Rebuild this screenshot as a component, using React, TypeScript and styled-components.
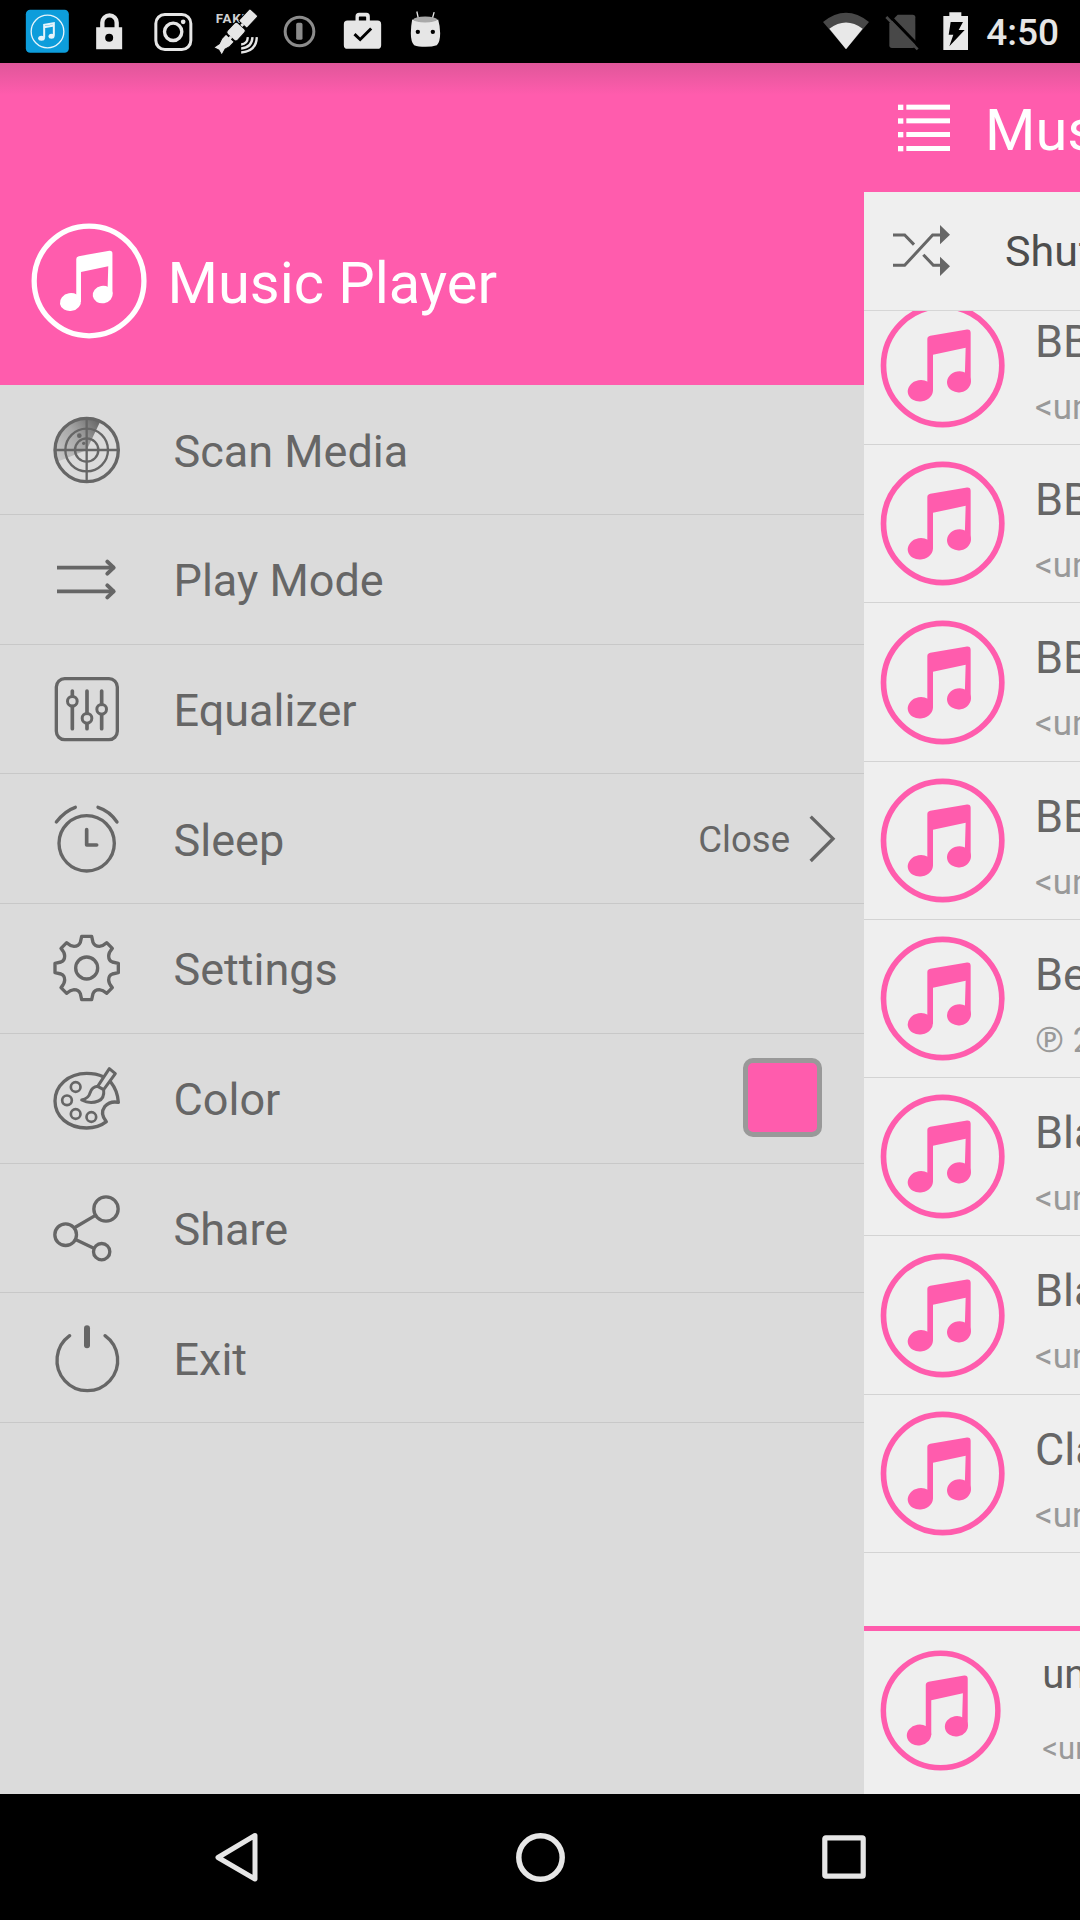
import React from "react";
import styled, { createGlobalStyle } from "styled-components";

const PINK = "#ff5cad";
const INK = "#666666";

const GlobalStyle = createGlobalStyle`
  * { box-sizing: border-box; }
  body { margin: 0; background: #000; font-family: Roboto, "Noto Sans", sans-serif; }
  svg { display: block; flex: none; }
`;

const Screen = styled.div`
  width: 1080px;
  height: 1920px;
  display: flex;
  flex-direction: column;
  overflow: hidden;
  background: #000;
`;

const StatusBar = styled.header`
  height: 63px;
  flex: none;
  display: flex;
  align-items: center;
  padding: 0 21px 0 16px;
  color: #e6e6e6;
`;

const Spacer = styled.div`
  flex: 1;
`;

const SystemIcons = styled.div`
  display: flex;
  align-items: center;
`;

const WifiSlot = styled.span`
  margin-right: 7px;
`;

const Clock = styled.span`
  margin-left: 10.5px;
  padding-top: 3px;
  font-size: 37px;
  font-weight: 500;
  line-height: 44px;
  white-space: nowrap;
`;

const Body = styled.main`
  position: relative;
  flex: 1;
  min-height: 0;
  display: flex;
`;

const TopShade = styled.div`
  position: absolute;
  inset: 0 0 auto 0;
  height: 32px;
  background: linear-gradient(rgba(70, 60, 60, 0.17), rgba(70, 60, 60, 0));
`;

const Drawer = styled.aside`
  width: 864px;
  flex: none;
  background: #dbdbdb;
`;

const DrawerHeader = styled.div`
  height: 322.4px;
  display: flex;
  align-items: center;
  gap: 20px;
  padding: 113px 0 0 30px;
  background: ${PINK};
  color: #fff;
`;

const AppName = styled.h1`
  margin: 0;
  padding-top: 5px;
  font-size: 57.8px;
  font-weight: 400;
  line-height: 68px;
`;

const MenuRow = styled.div`
  height: 129.7px;
  display: flex;
  align-items: center;
  padding-left: 51px;
  border-bottom: 1px solid #c8c8c8;
  color: ${INK};
`;

const MenuLabel = styled.span`
  flex: 1;
  margin-left: 52.5px;
  padding-top: 4px;
  font-size: 45px;
  line-height: 54px;
`;

const MenuValue = styled.span`
  margin-right: 18px;
  padding-top: 3px;
  font-size: 36.5px;
  line-height: 44px;
`;

const ChevronSlot = styled.span`
  margin-right: 28px;
`;

const Swatch = styled.span`
  width: 79px;
  height: 79px;
  margin: 0 42px 1px 0;
  border: 5px solid #999;
  border-radius: 10px;
  background: ${PINK};
`;

const Content = styled.section`
  width: 216px;
  flex: none;
  display: flex;
  flex-direction: column;
  overflow: hidden;
  background: #efefef;
  white-space: nowrap;
`;

const Toolbar = styled.div`
  height: 129px;
  flex: none;
  display: flex;
  align-items: center;
  gap: 35px;
  padding-left: 34px;
  background: ${PINK};
  color: #fff;
`;

const ToolbarTitle = styled.span`
  padding-top: 5px;
  font-size: 57.8px;
  line-height: 68px;
`;

const ShuffleRow = styled.div`
  height: 119px;
  flex: none;
  display: flex;
  align-items: center;
  gap: 55px;
  padding-left: 29px;
  border-bottom: 1px solid #d6d6d6;
  color: #4d4d4d;
`;

const ShuffleLabel = styled.span`
  font-size: 43px;
  line-height: 52px;
`;

const TrackList = styled.div`
  flex: 1;
  min-height: 0;
  display: flex;
  flex-direction: column;
  justify-content: flex-end;
  overflow: hidden;
  padding-bottom: 73px;
`;

const Track = styled.div`
  height: 158.3px;
  flex: none;
  display: flex;
  align-items: center;
  gap: 29px;
  padding-left: 15.3px;
  border-bottom: 1px solid #d3d3d3;
`;

const TrackText = styled.div`
  display: flex;
  flex-direction: column;
  align-self: flex-start;
  padding-top: 28px;
`;

const TrackTitle = styled.span`
  color: ${INK};
  font-size: 45px;
  line-height: 54px;
`;

const TrackArtist = styled.span`
  margin-top: 18px;
  color: #999;
  font-size: 35px;
  line-height: 42px;
`;

const Player = styled.div`
  height: 168px;
  flex: none;
  display: flex;
  gap: 41px;
  padding-left: 14.7px;
  border-top: 5px solid ${PINK};
`;

const PlayerArt = styled.div`
  padding-top: 17.5px;
`;

const PlayerText = styled.div`
  display: flex;
  flex-direction: column;
  padding-top: 20px;
`;

const PlayerTitle = styled.span`
  color: #5c5c5c;
  font-size: 40px;
  line-height: 48px;
`;

const PlayerArtist = styled.span`
  margin-top: 31px;
  color: #999;
  font-size: 31px;
  line-height: 38px;
`;

const NavBar = styled.nav`
  height: 126px;
  flex: none;
  display: flex;
  justify-content: center;
`;

const NavButton = styled.div`
  width: 303.7px;
  display: flex;
  align-items: center;
  justify-content: center;
`;

/* ---------- drawings ---------- */

const Notes = () => (
  <g>
    <path d="M-46 62V-79Q-46 -87 -37 -89L73 -108Q84 -109 84 -98V49H66L69 -53L-29 -32V76H-46Z" />
    <ellipse cx="-67" cy="76" rx="38" ry="32" transform="rotate(-10 -67 76)" />
    <ellipse cx="49" cy="49" rx="36" ry="31.5" transform="rotate(-10 49 49)" />
  </g>
);

const Disc = ({ size, color, noteScale = 1 }: { size: number; color: string; noteScale?: number }) => (
  <svg width={size} height={size} viewBox="-191 -190.5 380 380" fill={color}>
    <circle r="177.5" fill="none" stroke={color} strokeWidth="17" />
    <g transform={`scale(${noteScale})`}>
      <Notes />
    </g>
  </svg>
);

const StatusIcon = ({ children }: { children: React.ReactNode }) => (
  <svg width="63" height="63" viewBox="-94.5 -94.5 189 189" fill="#e6e6e6">
    {children}
  </svg>
);

const StatusIcons = () => (
  <>
    <StatusIcon>
      <rect x="-65" y="-65" width="129" height="129" rx="13" fill="#0d9ddb" />
      <circle r="49" fill="none" strokeWidth="4" stroke="#e6f4fb" />
      <path
        d="M-10 19V-20L19 -25V13M-10 -13L19 -18"
        fill="none"
        stroke="#e6f4fb"
        strokeWidth="6"
      />
      <ellipse cx="-18" cy="20" rx="10" ry="7.5" fill="#e6f4fb" />
      <ellipse cx="12" cy="14" rx="9" ry="7.5" fill="#e6f4fb" />
    </StatusIcon>
    <StatusIcon>
      <path
        fillRule="evenodd"
        d="M-43 -13H-31V-27A28 28 0 0 1 25 -27V-13H35V53H-43ZM-18 -13H12V-27A15 15 0 0 0 -18 -27ZM-16 19A12 12 0 1 0 8 19A12 12 0 1 0 -16 19Z"
      />
    </StatusIcon>
    <StatusIcon>
      <g fill="none" stroke="#e6e6e6">
        <rect x="-53" y="-51" width="105" height="105" rx="27" strokeWidth="9" />
        <circle cx="-1" cy="1" r="26" strokeWidth="10" />
      </g>
      <circle cx="29" cy="-29" r="7" />
    </StatusIcon>
    <StatusIcon>
      <text x="-62" y="-26" fontSize="40" fontWeight="700" letterSpacing="2" fill="#d2d2d2">
        FAKE
      </text>
      <g transform="translate(-2 1) rotate(-47)" stroke="#000" strokeWidth="3">
        <path d="M-80 -17L-75 0L-80 17L-60 12L-44 17L-25 17V-17H-44L-60 -12Z" />
        <rect x="30" y="-17" width="50" height="34" rx="4" />
        <rect x="-22" y="-21" width="46" height="42" rx="8" />
        <path d="M24 0H32M-30 0H-20" stroke="#e6e6e6" strokeWidth="9" />
      </g>
      <g fill="none" stroke="#e6e6e6" strokeWidth="7">
        <path d="M14 39Q33 37 34 17" />
        <path d="M14 51Q46 49 48 17" />
        <path d="M14 63Q59 60 61 17" />
      </g>
    </StatusIcon>
    <StatusIcon>
      <circle r="43" fill="none" stroke="#8c8c8c" strokeWidth="9" />
      <rect x="-10" y="-26" width="19" height="51" rx="5" fill="#8c8c8c" />
    </StatusIcon>
    <StatusIcon>
      <path
        fillRule="evenodd"
        d="M-45 -33H-21V-45Q-21 -56 -10 -56H12Q22 -56 22 -45V-33H45Q56 -33 56 -22V41Q56 52 45 52H-45Q-56 52 -56 41V-22Q-56 -33 -45 -33ZM-11 -33H11V-43Q11 -45 9 -45H-9Q-11 -45 -11 -43Z"
      />
      <path d="M-24 8L-7 24L26 -9" fill="none" stroke="#000" strokeWidth="9" />
    </StatusIcon>
    <StatusIcon>
      <path d="M-26 -60L-21 -37M26 -58L20 -37" stroke="#e6e6e6" strokeWidth="4" />
      <path d="M-40 -36Q0 -22 38 -36Q44 -15 44 5Q44 31 34 41Q20 46 0 46Q-22 46 -34 41Q-44 31 -44 5Q-44 -15 -40 -36Z" />
      <ellipse cx="-1" cy="-36" rx="36" ry="9" fill="#a9a9a9" />
      <circle cx="-23" cy="1" r="6.5" fill="#000" />
      <circle cx="22" cy="1" r="6.5" fill="#000" />
    </StatusIcon>
  </>
);

const WifiIcon = () => (
  <svg width="46" height="63" viewBox="127 0 138 189">
    <path d="M127 66Q196 11 265 66L196 148Z" fill="#484848" />
    <path d="M146 86Q196 49 246 86L196 148Z" fill="#e8e8e8" />
  </svg>
);

const NoSimIcon = () => (
  <svg width="51" height="63" viewBox="287 0 153 189">
    <path d="M352 44H397Q405 44 405 52V136Q405 144 397 144H335Q327 144 327 136V70Z" fill="#484848" />
    <path d="M326 46L418 141" stroke="#000" strokeWidth="9" />
    <path d="M318 51L412 148" stroke="#484848" strokeWidth="8" />
  </svg>
);

const BatteryIcon = () => (
  <svg width="49" height="63" viewBox="440 0 147 189">
    <path d="M489 48H507V37H543V48H563V150H489Z" fill="#e8e8e8" />
    <path d="M511 66H548L535 90H553L507 139L519 104H505Z" fill="#000" />
  </svg>
);

const MenuIcon = ({ children }: { children: React.ReactNode }) => (
  <svg
    width="70"
    height="70"
    viewBox="-107 -105 210 210"
    fill="none"
    stroke={INK}
    strokeWidth="9"
    strokeLinecap="round"
    strokeLinejoin="round"
  >
    {children}
  </svg>
);

const RadarIcon = () => (
  <MenuIcon>
    <defs>
      <linearGradient id="sweep" x1="0" y1="0.9" x2="1" y2="0.2">
        <stop offset="0" stopColor="#666" stopOpacity="0.15" />
        <stop offset="0.55" stopColor="#666" stopOpacity="0.45" />
        <stop offset="1" stopColor="#666" stopOpacity="0.95" />
      </linearGradient>
    </defs>
    <path d="M0 0L-88 35A95 95 0 0 1 41 -86Z" fill="url(#sweep)" stroke="none" />
    <circle r="95" strokeWidth="10" />
    <circle r="64" strokeWidth="7" />
    <circle r="35" strokeWidth="7" />
    <path d="M-95 0H95M0 -95V95" strokeWidth="7" />
    <circle cx="-22" cy="-43" r="7" fill={INK} stroke="none" />
    <circle cx="-9" cy="-20" r="5" fill={INK} stroke="none" />
  </MenuIcon>
);

const PlayModeIcon = () => (
  <MenuIcon>
    <path d="M-89 -34H83M-89 37H83" strokeWidth="11" strokeLinecap="butt" />
    <path d="M62 -52L81 -34L62 -16M62 19L81 37L62 55" strokeWidth="12" />
  </MenuIcon>
);

const EqualizerIcon = () => (
  <MenuIcon>
    <rect x="-91" y="-91" width="183" height="183" rx="25" strokeWidth="10" />
    <g strokeWidth="11">
      <path d="M-43 -54V-40M-43 -8V59M1 -54V13M1 45V59M45 -54V-14M45 17V59" />
      <circle cx="-43" cy="-23" r="14.5" strokeWidth="9" />
      <circle cx="1" cy="28" r="14.5" strokeWidth="9" />
      <circle cx="45" cy="1" r="14.5" strokeWidth="9" />
    </g>
  </MenuIcon>
);

const SleepIcon = () => (
  <MenuIcon>
    <circle cy="13" r="83" strokeWidth="10" />
    <path d="M0 -28V18H30" strokeWidth="11" />
    <path d="M-91 -51Q-66 -84 -34 -95M91 -51Q69 -84 34 -95" strokeWidth="10" />
  </MenuIcon>
);

const GearIcon = () => (
  <MenuIcon>
    <path
      strokeWidth="10"
      d={
        "M-15 -95H15L19 -77Q24 -65 38 -65Q49 -66 60 -76L77 -59" +
        "Q66 -47 66 -36Q66 -22 77 -18L95 -14V14L77 18Q66 22 66 36Q66 47 77 59L60 76" +
        "Q49 66 38 65Q24 65 19 77L15 95H-15L-19 77Q-24 65 -38 65Q-49 66 -60 76L-77 59" +
        "Q-66 47 -66 36Q-66 22 -77 18L-95 14V-14L-77 -18Q-66 -22 -66 -36Q-66 -47 -77 -59L-60 -76" +
        "Q-49 -66 -38 -65Q-24 -65 -19 -77Z"
      }
    />
    <circle r="33" strokeWidth="10" />
  </MenuIcon>
);

const PaletteIcon = () => (
  <MenuIcon>
    <path
      strokeWidth="10"
      d="M50 -64Q28 -74 0 -74C-55 -74 -95 -37 -95 9C-95 56 -55 90 0 90Q35 90 59 71Q39 46 54 26Q70 8 95 13Q93 -22 72 -48"
    />
    <path
      d="M68 -88L86 -73L51 -25Q54 2 35 9Q10 19 -15 6Q6 1 10 -15Q16 -34 33 -35ZM33 -35L51 -25"
      strokeWidth="9"
    />
    <g strokeWidth="8">
      <circle cx="-33" cy="-33" r="14.5" />
      <circle cx="-59" cy="7" r="14.5" />
      <circle cx="-33" cy="48" r="14.5" />
      <circle cx="14" cy="57" r="14.5" />
    </g>
  </MenuIcon>
);

const ShareIcon = () => (
  <MenuIcon>
    <circle cx="58" cy="-57" r="36.5" strokeWidth="10" />
    <circle cx="-63" cy="20" r="32.5" strokeWidth="10" />
    <circle cx="45" cy="71" r="24.5" strokeWidth="10" />
    <path d="M-33 -3L25 -37M-32 35L20 60" strokeWidth="10" />
  </MenuIcon>
);

const PowerIcon = () => (
  <MenuIcon>
    <path d="M-51 -67A91 91 0 1 0 55 -67" strokeWidth="10" />
    <path d="M1 -89V-38" strokeWidth="18" />
  </MenuIcon>
);

const Chevron = () => (
  <svg width="28" height="50" viewBox="0 0 84 150" fill="none" stroke={INK} strokeWidth="10">
    <path d="M8 8L75 74L8 141" />
  </svg>
);

const ListIcon = () => (
  <svg width="52" height="48" viewBox="0 0 156 144" fill="#fff">
    {[0, 41, 82, 124].map((y) => (
      <g key={y}>
        <rect x="0" y={y + 2} width="16" height="16" />
        <rect x="25" y={y + 2} width="131" height="15" />
      </g>
    ))}
  </svg>
);

const ShuffleIcon = () => (
  <svg width="57" height="52" viewBox="0 0 171 156" fill="none" stroke={INK} strokeWidth="9">
    <path d="M0 30H35L63 59M0 121H35L119 30H145M91 89L121 121H145" />
    <path d="M141 0L171 29L141 58ZM141 95L171 124L141 153Z" fill={INK} stroke="none" />
  </svg>
);

/* ---------- data ---------- */

type MenuEntry = { label: string; icon: React.ReactNode; trailing?: React.ReactNode };

const menu: MenuEntry[] = [
  { label: "Scan Media", icon: <RadarIcon /> },
  { label: "Play Mode", icon: <PlayModeIcon /> },
  { label: "Equalizer", icon: <EqualizerIcon /> },
  {
    label: "Sleep",
    icon: <SleepIcon />,
    trailing: (
      <>
        <MenuValue>Close</MenuValue>
        <ChevronSlot>
          <Chevron />
        </ChevronSlot>
      </>
    ),
  },
  { label: "Settings", icon: <GearIcon /> },
  { label: "Color", icon: <PaletteIcon />, trailing: <Swatch /> },
  { label: "Share", icon: <ShareIcon /> },
  { label: "Exit", icon: <PowerIcon /> },
];

const tracks = [
  { title: "BB", artist: "<unknown>" },
  { title: "BB", artist: "<unknown>" },
  { title: "BB", artist: "<unknown>" },
  { title: "BB", artist: "<unknown>" },
  { title: "Be", artist: "℗ 2" },
  { title: "Bla", artist: "<unknown>" },
  { title: "Bla", artist: "<unknown>" },
  { title: "Cla", artist: "<unknown>" },
];

export default function App() {
  return (
    <Screen>
      <GlobalStyle />
      <StatusBar>
        <StatusIcons />
        <Spacer />
        <SystemIcons>
          <WifiSlot>
            <WifiIcon />
          </WifiSlot>
          <NoSimIcon />
          <BatteryIcon />
        </SystemIcons>
        <Clock>4:50</Clock>
      </StatusBar>
      <Body>
        <Drawer>
          <DrawerHeader>
            <Disc size={117.5} color="#fff" noteScale={0.9} />
            <AppName>Music Player</AppName>
          </DrawerHeader>
          {menu.map((m) => (
            <MenuRow key={m.label}>
              {m.icon}
              <MenuLabel>{m.label}</MenuLabel>
              {m.trailing}
            </MenuRow>
          ))}
        </Drawer>
        <Content>
          <Toolbar>
            <ListIcon />
            <ToolbarTitle>Music Player</ToolbarTitle>
          </Toolbar>
          <ShuffleRow>
            <ShuffleIcon />
            <ShuffleLabel>Shuffle</ShuffleLabel>
          </ShuffleRow>
          <TrackList>
            {tracks.map((t, i) => (
              <Track key={i}>
                <Disc size={126.67} color={PINK} />
                <TrackText>
                  <TrackTitle>{t.title}</TrackTitle>
                  <TrackArtist>{t.artist}</TrackArtist>
                </TrackText>
              </Track>
            ))}
          </TrackList>
          <Player>
            <PlayerArt>
              <Disc size={122.6} color={PINK} />
            </PlayerArt>
            <PlayerText>
              <PlayerTitle>unknown</PlayerTitle>
              <PlayerArtist>{"<unknown>"}</PlayerArtist>
            </PlayerText>
          </Player>
        </Content>
        <TopShade />
      </Body>
      <NavBar>
        <NavButton>
          <svg width="44" height="50" viewBox="0 0 44 50" fill="none" stroke="#e6e6e6" strokeWidth="5" strokeLinejoin="round">
            <path d="M41 3.5L4 25.5L41 47Z" />
          </svg>
        </NavButton>
        <NavButton>
          <svg width="50" height="50" viewBox="0 0 50 50" fill="none" stroke="#e6e6e6" strokeWidth="5.5">
            <circle cx="25.5" cy="25.5" r="21.7" />
          </svg>
        </NavButton>
        <NavButton>
          <svg width="44" height="44" viewBox="0 0 44 44" fill="none" stroke="#e6e6e6" strokeWidth="5.2">
            <rect x="2.8" y="2.8" width="38.4" height="38.4" rx="1" />
          </svg>
        </NavButton>
      </NavBar>
    </Screen>
  );
}
